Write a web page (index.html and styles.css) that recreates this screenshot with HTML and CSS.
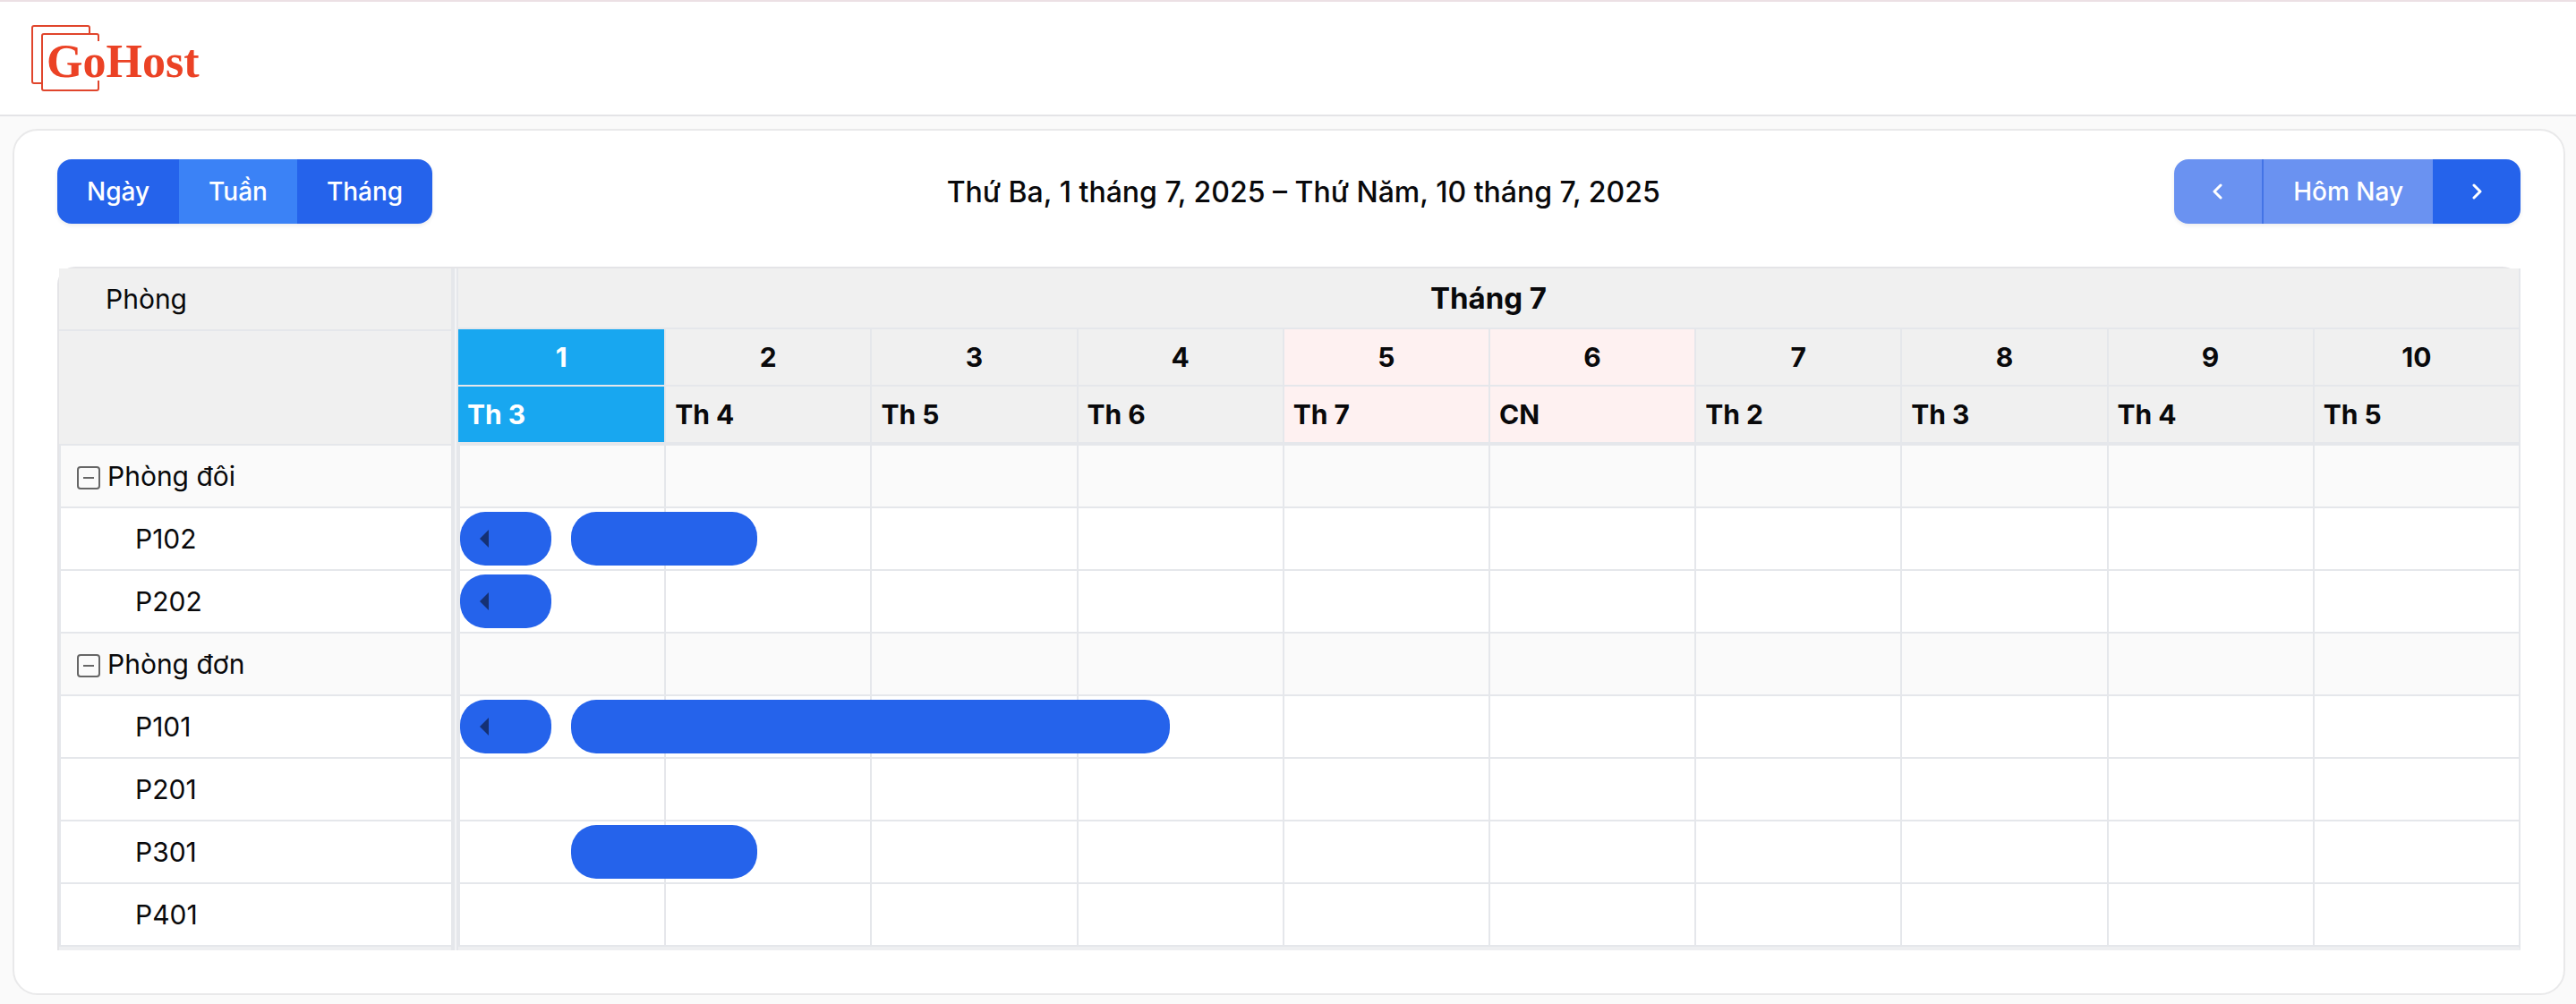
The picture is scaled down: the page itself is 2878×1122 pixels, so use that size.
FILE: index.html
```html
<!DOCTYPE html>
<html lang="vi">
<head>
    <meta charset="UTF-8">
    <meta name="viewport" content="width=device-width, initial-scale=1.0">
    <title>GoHost</title>
    <link rel="stylesheet" href="styles.css">
</head>
<body>
    <header class="header">
        <a class="logo" href="#" aria-label="GoHost">
            <svg width="192" height="76" viewBox="0 0 192 76">
                <g fill="none" stroke="#e0452c" stroke-width="2">
                    <path d="M11 65H3a2 2 0 0 1-2-2V3a2 2 0 0 1 2-2h60a2 2 0 0 1 2 2v7"/>
                    <path d="M75 18v-6a2 2 0 0 0-2-2H14a2 2 0 0 0-2 2v59a2 2 0 0 0 2 2h59a2 2 0 0 0 2-2v-9"/>
                </g>
                <text class="logo-text" x="17" y="58">GoHost</text>
            </svg>
        </a>
    </header>

    <main class="card">
        <div class="toolbar">
            <div class="btn-group">
                <button class="btn" type="button">Ngày</button>
                <button class="btn active" type="button">Tuần</button>
                <button class="btn" type="button">Tháng</button>
            </div>
            <h2 class="title">Thứ Ba, 1 tháng 7, 2025 – Thứ Năm, 10 tháng 7, 2025</h2>
            <div class="btn-group">
                <button class="btn btn-icon" type="button" aria-label="Trước" disabled>
                    <svg width="12" height="24" viewBox="0 0 12 24"><path d="M9 7l-7 7 7 7"/></svg>
                </button>
                <button class="btn today" type="button" disabled>Hôm Nay</button>
                <button class="btn btn-icon" type="button" aria-label="Sau">
                    <svg width="12" height="24" viewBox="0 0 12 24"><path d="M3 7l7 7-7 7"/></svg>
                </button>
            </div>
        </div>

        <div class="scheduler">
            <!-- Room list -->
            <div class="rooms">
                <table>
                    <thead>
                        <tr><th>Phòng</th></tr>
                        <tr><td class="blank"></td></tr>
                    </thead>
                    <tbody>
                        <tr class="group"><td><div class="group-label"><button class="toggle" type="button" aria-label="Thu gọn"><svg width="26" height="26" viewBox="0 0 26 26"><rect x="1" y="1" width="24" height="24" rx="3"/><path d="M7 13h12"/></svg></button>Phòng đôi</div></td></tr>
                        <tr><td>P102</td></tr>
                        <tr><td>P202</td></tr>
                        <tr class="group"><td><div class="group-label"><button class="toggle" type="button" aria-label="Thu gọn"><svg width="26" height="26" viewBox="0 0 26 26"><rect x="1" y="1" width="24" height="24" rx="3"/><path d="M7 13h12"/></svg></button>Phòng đơn</div></td></tr>
                        <tr><td>P101</td></tr>
                        <tr><td>P201</td></tr>
                        <tr><td>P301</td></tr>
                        <tr><td>P401</td></tr>
                    </tbody>
                </table>
            </div>

            <div class="divider"></div>

            <!-- Bookings -->
            <div class="timeline">
                <table>
                    <thead>
                        <tr class="month"><th colspan="10">Tháng 7</th></tr>
                        <tr class="dates">
                            <th class="now">1</th><th>2</th><th>3</th><th>4</th><th class="weekend">5</th>
                            <th class="weekend">6</th><th>7</th><th>8</th><th>9</th><th>10</th>
                        </tr>
                        <tr class="weekdays">
                            <th class="now">Th 3</th><th>Th 4</th><th>Th 5</th><th>Th 6</th><th class="weekend">Th 7</th>
                            <th class="weekend">CN</th><th>Th 2</th><th>Th 3</th><th>Th 4</th><th>Th 5</th>
                        </tr>
                    </thead>
                    <tbody>
                        <tr class="group"><td></td><td></td><td></td><td></td><td></td><td></td><td></td><td></td><td></td><td></td></tr>
                        <tr>
                            <td>
                                <div class="event past" style="left: 0; width: 44.7%"></div>
                                <div class="event" style="left: 54.4%; width: 91.2%"></div>
                            </td>
                            <td></td><td></td><td></td><td></td><td></td><td></td><td></td><td></td><td></td>
                        </tr>
                        <tr>
                            <td>
                                <div class="event past" style="left: 0; width: 44.7%"></div>
                            </td>
                            <td></td><td></td><td></td><td></td><td></td><td></td><td></td><td></td><td></td>
                        </tr>
                        <tr class="group"><td></td><td></td><td></td><td></td><td></td><td></td><td></td><td></td><td></td><td></td></tr>
                        <tr>
                            <td>
                                <div class="event past" style="left: 0; width: 44.7%"></div>
                                <div class="event" style="left: 54.4%; width: 293%"></div>
                            </td>
                            <td></td><td></td><td></td><td></td><td></td><td></td><td></td><td></td><td></td>
                        </tr>
                        <tr><td></td><td></td><td></td><td></td><td></td><td></td><td></td><td></td><td></td><td></td></tr>
                        <tr>
                            <td>
                                <div class="event" style="left: 54.4%; width: 91.2%"></div>
                            </td>
                            <td></td><td></td><td></td><td></td><td></td><td></td><td></td><td></td><td></td>
                        </tr>
                        <tr><td></td><td></td><td></td><td></td><td></td><td></td><td></td><td></td><td></td><td></td></tr>
                    </tbody>
                </table>
            </div>
        </div>
    </main>
</body>
</html>
```

FILE: styles.css
```css
* {
    box-sizing: border-box;
}
body {
    margin: 0;
    background: #fafafa;
    color: #09090b;
    font-family: Inter, "Liberation Sans", sans-serif;
    font-size: 30px;
}
.header {
    height: 130px;
    padding: 26px 35px;
    background: white;
    border-top: 2px solid #ece0e4;
    border-bottom: 2px solid #e4e4e7;
}
.logo {
    display: inline-block;
}
.logo svg {
    display: block;
}
.logo-text {
    fill: #eb4225;
    font-family: "Liberation Serif", serif;
    font-size: 52px;
    font-weight: bold;
}
.card {
    margin: 14px 12px 10px 14px;
    padding: 32px 48px 48px;
    background: white;
    border: 2px solid #e9e9ea;
    border-radius: 28px;
}

/* Toolbar */
.toolbar {
    display: flex;
    justify-content: space-between;
    align-items: center;
    margin-bottom: 48px;
}
.title {
    margin: 0;
    font-size: 32px;
    font-weight: 500;
}
.btn-group {
    display: flex;
    border-radius: 16px;
    box-shadow: 0 2px 4px rgba(0,0,0,0.08);
    overflow: hidden;
}
.btn {
    height: 72px;
    padding: 0 33px;
    border: none;
    background: #2563eb;
    color: white;
    font-family: inherit;
    font-size: 28px;
    font-weight: 500;
    cursor: pointer;
}
.btn.active {
    background: #3b82f6;
}
.btn:disabled {
    background: #6a92f1;
    cursor: default;
}
.btn.today {
    border-left: 2px solid #4474e6;
}
.btn-icon {
    width: 98px;
    padding: 0;
}
.btn-icon svg {
    fill: none;
    stroke: white;
    stroke-width: 3px;
    stroke-linecap: round;
    stroke-linejoin: round;
}

/* Scheduler */
.scheduler {
    display: flex;
    border-top: 2px solid #e4e4e7;
    border-left: 2px solid #e4e4e7;
    border-radius: 20px 20px 0 0;
}
table {
    width: 100%;
    table-layout: fixed;
    border-collapse: separate;
    border-spacing: 0;
}
th, td {
    height: 70px;
    padding: 0;
    border-bottom: 2px solid #e5e7eb;
    line-height: 36px;
}
thead th, thead td {
    background: #f0f0f0;
}
.group td {
    background: #fafafa;
}
.rooms {
    width: 438px;
    border-bottom: 4px solid #eeeff1;
}
.rooms th {
    padding-left: 52px;
    font-weight: 400;
    text-align: left;
}
.rooms .blank {
    height: 128px;
}
.rooms tbody td {
    padding-left: 83px;
    border-left: 2px solid #e5e7eb;
}
.rooms tbody .group td {
    padding-left: 18px;
}
.group-label {
    display: flex;
    align-items: center;
    gap: 8px;
}
.toggle {
    padding: 4px 0 0;
    border: none;
    background: none;
    line-height: 0;
    cursor: pointer;
}
.toggle svg {
    fill: none;
    stroke: #666;
    stroke-width: 2px;
}
.divider {
    width: 8px;
    background: #f3f4f6;
    border-left: 4px solid #e5e7eb;
    border-right: 2px solid #e5e7eb;
}
.timeline {
    flex: 1;
    border-right: 2px solid #e5e7eb;
    border-bottom: 4px solid #eeeff1;
}
.timeline th + th, .timeline td + td {
    border-left: 2px solid #e5e7eb;
}
.timeline .month th {
    height: 68px;
    font-size: 33px;
}
.timeline .dates th {
    height: 64px;
}
.timeline .weekdays th {
    height: 66px;
    padding-left: 10px;
    border-bottom-width: 4px;
    text-align: left;
}
.timeline .weekend {
    background: #fef1f1;
}
.timeline .now {
    background: #18a7f0;
    color: white;
}
.timeline tbody td {
    position: relative;
}
.timeline tbody td:first-child {
    border-left: 2px solid #e5e7eb;
}
.event {
    position: absolute;
    z-index: 1;
    top: 4px;
    height: 60px;
    background: #2563eb;
    border-radius: 28px;
}
/* arrow for bookings that began before the first day */
.event.past::before {
    content: "";
    position: absolute;
    top: 20px;
    left: 22px;
    border: 10px solid transparent;
    border-left-width: 0;
    border-right-color: #153174;
}
```
